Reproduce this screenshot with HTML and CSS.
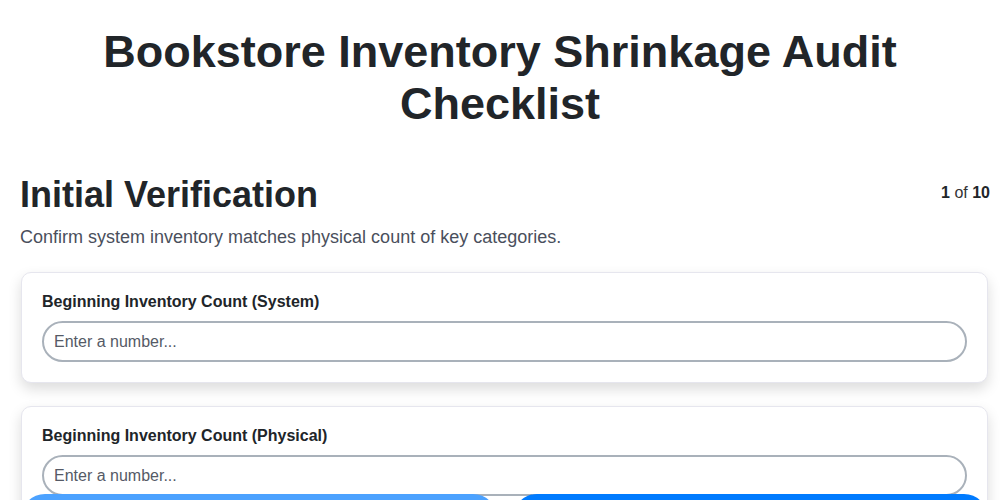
FILE: index.html
```html
<!DOCTYPE html>
<html lang="en">
<head>
<meta charset="utf-8">
<title>Bookstore Inventory Shrinkage Audit Checklist</title>
<link rel="stylesheet" href="styles.css">
</head>
<body>
<div class="page">
  <h1 class="title">Bookstore Inventory Shrinkage Audit Checklist</h1>
  <div class="step-head">
    <div class="step-text">
      <h2 class="step-title">Initial Verification</h2>
      <p class="step-desc">Confirm system inventory matches physical count of key categories.</p>
    </div>
    <div class="step-count"><b>1</b> of <b>10</b></div>
  </div>
  <div class="card">
    <label class="field-label" for="f1">Beginning Inventory Count (System)</label>
    <input class="field-input" id="f1" type="text" placeholder="Enter a number...">
  </div>
  <div class="card">
    <label class="field-label" for="f2">Beginning Inventory Count (Physical)</label>
    <input class="field-input" id="f2" type="text" placeholder="Enter a number...">
  </div>
</div>
<div class="nav">
  <button class="btn btn-prev" type="button">Previous</button>
  <button class="btn btn-next" type="button">Next</button>
</div>
</body>
</html>
```

FILE: styles.css
```css
* { box-sizing: border-box; }
html, body { margin: 0; padding: 0; background: #fff; }
body {
  font-family: "Liberation Sans", Arial, sans-serif;
  color: #222;
}
.page {
  padding: 26px 10px 0 20px;
}
.title {
  margin: 0 0 43px -10px;
  font-size: 45px;
  line-height: 52px;
  font-weight: 700;
  text-align: center;
  color: #212529;
}
.step-head {
  display: flex;
  justify-content: space-between;
  align-items: flex-start;
}
.step-title {
  margin: 0;
  font-size: 36px;
  line-height: 43px;
  font-weight: 700;
  color: #212529;
}
.step-desc {
  margin: 8px 0 0 0;
  font-size: 18px;
  line-height: 27px;
  color: #4a4f5c;
}
.step-count {
  margin-top: 11px;
  font-size: 16px;
  line-height: 18px;
  color: #333;
}
.step-count b { color: #212529; }
.card {
  margin: 21px 2px 0 1px;
  padding: 20px;
  border: 1px solid #e6e6ee;
  border-radius: 10px;
  background: #fff;
  box-shadow: 0 6px 14px rgba(0, 0, 0, 0.14);
}
.card + .card { margin-top: 23px; }
.field-label {
  display: block;
  margin-bottom: 10px;
  font-size: 16px;
  line-height: 18px;
  font-weight: 700;
  color: #212529;
}
.field-input {
  display: block;
  width: 100%;
  height: 41px;
  padding: 0 10px;
  border: 2px solid #a9b1ba;
  border-radius: 21px;
  font-family: "Liberation Sans", Arial, sans-serif;
  font-size: 16px;
  color: #222;
  background: #fff;
  outline: none;
}
.field-input::placeholder { color: #555a66; opacity: 1; }
.nav {
  position: fixed;
  left: 21px;
  right: 12px;
  bottom: -42px;
  display: flex;
  gap: 16px;
}
.btn {
  flex: 1;
  height: 48px;
  border: none;
  border-radius: 24px;
  font-family: "Liberation Sans", Arial, sans-serif;
  font-size: 16px;
  font-weight: 700;
  color: #fff;
}
.btn-prev { background: #4ca2ff; }
.btn-next { background: #007bff; }
```
